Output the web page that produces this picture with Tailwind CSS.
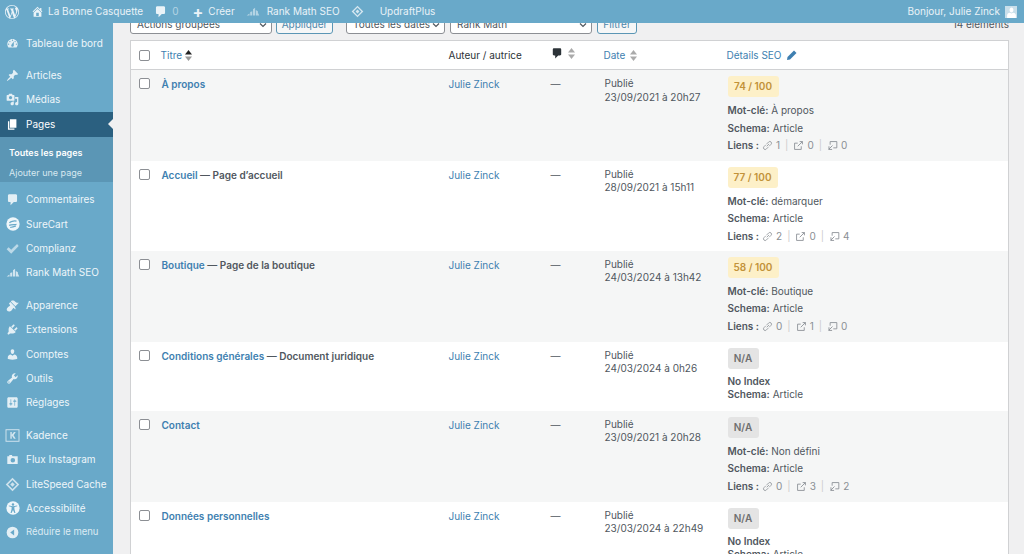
<!DOCTYPE html>
<html lang="fr">
<head>
  <meta charset="UTF-8">
  <title>Pages - La Bonne Casquette</title>
  <script src="https://cdn.jsdelivr.net/npm/@tailwindcss/browser@4"></script>
</head>
<body class="font-['Inter',sans-serif] text-[10px] bg-[#f0f0f1] text-[#50575e] overflow-hidden">
  <svg class="hidden">
    <symbol id="i-rank" viewBox="0 0 20 20"><path d="M1 15l4-3v3zM6 15v-5l3-1v6zM10 15V6l3-2v11zM14 15V7l3 2v6zM17 11l2 4h-2z"/></symbol>
    <symbol id="i-diamond" viewBox="0 0 20 20"><path fill-rule="evenodd" d="M10 1l9 9-9 9-9-9zM10 4l-6 6 6 6 6-6z"/><path d="M10 7l3 3-3 3-3-3z"/></symbol>
    <symbol id="i-comment" viewBox="0 0 20 20"><path d="M5 2h10c1.1 0 2 .9 2 2v8c0 1.1-.9 2-2 2h-3l-5 5v-5H5c-1.1 0-2-.9-2-2V4c0-1.100.9-2 2-2z"/></symbol>
    <symbol id="i-link" viewBox="0 0 14 14"><path fill="none" stroke="currentColor" stroke-width="1" d="M6 8l3-3M5 6L2.500 8.500a2 2 0 0 0 3 3L8 9M6 5l2.500-2.500a2 2 0 0 1 3 3L9 8"/></symbol>
    <symbol id="i-ext" viewBox="0 0 14 14"><path fill="none" stroke="currentColor" stroke-width="1.100" d="M10.500 8v4h-8.500V4h4M6 8l6-6M8.500 2H12v3.500"/></symbol>
    <symbol id="i-int" viewBox="0 0 14 14"><path fill="none" stroke="currentColor" stroke-width="1.100" d="M4 6V2h8.500v8H8M2 12l5-5M2.500 8v4H6.500"/></symbol>
  </svg>

  <!-- barre d'admin, passe au-dessus du contenu -->
  <header class="absolute top-0 left-0 z-10 w-full h-[23px] bg-[#69a9c9] text-[#eaf3f8] flex items-center justify-between pr-[7px]">
    <div class="flex items-center">
      <svg class="w-[14px] h-[14px] ml-[5px] fill-[#eaf3f8]" viewBox="0 0 20 20"><path d="M20 10c0-5.510-4.490-10-10-10C4.480 0 0 4.490 0 10c0 5.520 4.480 10 10 10 5.510 0 10-4.480 10-10zM7.780 15.370L4.370 6.220c.55-.02 1.170-.08 1.170-.08.5-.06.44-1.130-.06-1.110 0 0-1.450.11-2.370.11-.18 0-.37 0-.58-.01C4.120 2.690 6.870 1.110 10 1.110c2.330 0 4.450.87 6.050 2.340-.68-.11-1.650.39-1.650 1.580 0 .74.45 1.360.9 2.100.35.61.55 1.360.55 2.460 0 1.490-1.400 5-1.400 5l-3.030-8.370c.54-.02.82-.17.82-.17.5-.05.44-1.250-.06-1.220 0 0-1.440.12-2.380.12-.87 0-2.330-.12-2.330-.12-.5-.03-.56 1.200-.06 1.220l.92.08 1.260 3.410zM17.410 10c.24-.64.74-1.870.43-4.250.7 1.290 1.050 2.710 1.050 4.250 0 3.290-1.730 6.240-4.400 7.780.97-2.590 1.940-5.200 2.920-7.780zM6.100 18.090C3.120 16.650 1.110 13.530 1.110 10c0-1.300.23-2.480.72-3.590C3.250 10.300 4.670 14.200 6.100 18.090zm4.030-6.630l2.580 6.980c-.86.29-1.760.45-2.710.45-.79 0-1.570-.11-2.290-.33.81-2.380 1.620-4.740 2.420-7.100z"/></svg>
      <svg class="w-[13px] h-[13px] ml-[12px] fill-[#eaf3f8]" viewBox="0 0 20 20"><path d="M16 8.500l1.530 1.530-1.060 1.060L10 4.620l-6.470 6.470-1.060-1.060L10 2.500l4 4v-2h2v4zm-6-2.460l6 5.990V18H4v-5.970zM12 17v-5H8v5h4z"/></svg>
      <span class="ml-[4px]">La Bonne Casquette</span>
      <svg class="w-[13px] h-[13px] ml-[11px] fill-[#eaf3f8]"><use href="#i-comment"/></svg>
      <span class="ml-[5px] text-[#b4d4e4]">0</span>
      <span class="ml-[14px] text-[16px] leading-none font-bold">+</span>
      <span class="ml-[5px]">Créer</span>
      <svg class="w-[14px] h-[14px] ml-[11px] fill-[#b4d4e4]"><use href="#i-rank"/></svg>
      <span class="ml-[7px]">Rank Math SEO</span>
      <svg class="w-[13px] h-[13px] ml-[11px] fill-[#d5e7f0]"><use href="#i-diamond"/></svg>
      <span class="ml-[16px]">UpdraftPlus</span>
    </div>
    <div class="flex items-center">
      <span>Bonjour, Julie Zinck</span>
      <span class="ml-[5px] w-[12px] h-[12px] bg-[#c9dfea] flex items-end justify-center overflow-hidden">
        <svg class="w-[11px] h-[11px] fill-white" viewBox="0 0 20 20"><path d="M10 10c-2.500 0-3.500-3-3.500-5S8 1 10 1s3.500 2 3.500 4-1 5-3.500 5zm0 2l3-1.500c3 0 5 2.500 5 5V20H2v-4.500c0-2.500 2-5 5-5z"/></svg>
      </span>
    </div>
  </header>

  <div class="flex h-[554px] overflow-hidden">
    <!-- menu latéral -->
    <aside class="w-[113px] shrink-0 bg-[#69a9c9] text-[#eef6fa] pt-[31px]">
      <a class="flex items-center h-[24.4px]"><svg class="w-[13px] h-[13px] ml-[6px] mr-[7px] fill-[#e3eff5]" viewBox="0 0 20 20"><path d="M3.760 16h12.480c1.100-1.370 1.760-3.110 1.760-5 0-4.420-3.580-8-8-8s-8 3.580-8 8c0 1.890.66 3.630 1.760 5zM10 4c.55 0 1 .45 1 1s-.45 1-1 1-1-.45-1-1 .45-1 1-1zM6 6c.55 0 1 .45 1 1s-.45 1-1 1-1-.45-1-1 .45-1 1-1zm8 0c.55 0 1 .45 1 1s-.45 1-1 1-1-.45-1-1 .45-1 1-1zm-5.370 5.550L12 7v6c0 1.100-.9 2-2 2s-2-.9-2-2c0-.57.24-1.080.63-1.450zM4 10c.55 0 1 .45 1 1s-.45 1-1 1-1-.45-1-1 .45-1 1-1zm12 0c.55 0 1 .45 1 1s-.45 1-1 1-1-.45-1-1 .45-1 1-1z"/></svg>Tableau de bord</a>
      <div class="h-[8px]"></div>
      <a class="flex items-center h-[24.4px]"><svg class="w-[13px] h-[13px] ml-[6px] mr-[7px] fill-[#e3eff5]" viewBox="0 0 20 20"><path d="M10.440 3.020l1.820-1.820 6.360 6.350-1.830 1.820c-1.050-.68-2.480-.57-3.410.36l-.75.75c-.92.93-1.040 2.350-.35 3.410l-1.830 1.820-2.410-2.410-2.800 2.790c-.42.42-3.380 2.710-3.800 2.290s1.860-3.390 2.280-3.810l2.790-2.790L4.100 9.360l1.830-1.820c1.050.69 2.480.57 3.400-.36l.75-.75c.93-.92 1.050-2.350.36-3.410z"/></svg>Articles</a>
      <a class="flex items-center h-[24.4px]"><svg class="w-[13px] h-[13px] ml-[6px] mr-[7px] fill-[#e3eff5]" viewBox="0 0 20 20"><path d="M13 11V4c0-.55-.45-1-1-1h-1.670L9 1H5L3.670 3H2c-.55 0-1 .45-1 1v7c0 .55.45 1 1 1h10c.55 0 1-.45 1-1zM7 4.500c1.380 0 2.500 1.120 2.500 2.500S8.380 9.500 7 9.500 4.500 8.380 4.500 7 5.620 4.500 7 4.500zM14 6h5v10.500c0 1.380-1.120 2.500-2.500 2.500S14 17.880 14 16.500s1.120-2.500 2.500-2.500c.17 0 .34.02.5.05V9h-3V6zm-4 8.050V13h2v3.500c0 1.380-1.120 2.500-2.500 2.500S7 17.880 7 16.500 8.120 14 9.500 14c.17 0 .34.02.5.05z"/></svg>Médias</a>
      <a class="relative flex items-center h-[24.4px] bg-[#2b6080] text-white"><svg class="w-[13px] h-[13px] ml-[6px] mr-[7px] fill-white" viewBox="0 0 20 20"><path d="M6 15V2h10v13H6zm-1 1h8v2H3V5h2v11z"/></svg>Pages<span class="absolute right-0 top-[7px] border-y-[5px] border-r-[5px] border-y-transparent border-r-[#f0f0f1]"></span></a>
      <div class="bg-[#5b96b5] h-[45px] pt-[7px] pl-[9px] text-[9px]">
        <a class="flex items-center h-[19px] font-semibold text-white">Toutes les pages</a>
        <a class="flex items-center h-[21px] text-[#d7e8f0]">Ajouter une page</a>
      </div>
      <a class="flex items-center h-[24.4px] mt-[6px]"><svg class="w-[13px] h-[13px] ml-[6px] mr-[7px] fill-[#e3eff5]"><use href="#i-comment"/></svg>Commentaires</a>
      <a class="flex items-center h-[24.4px]"><svg class="w-[14px] h-[14px] ml-[6px] mr-[6px]" viewBox="0 0 20 20"><circle cx="10" cy="10" r="9.500" fill="#eef6fa"/><path d="M5 8.500c1-2 6-3.500 10-2.500M4.500 12c3-1 7-1 10.500-1.500M6 15c2-1 5-1 8-2" stroke="#69a9c9" stroke-width="1.800" fill="none"/></svg>SureCart</a>
      <a class="flex items-center h-[24.4px]"><svg class="w-[13px] h-[13px] ml-[6px] mr-[7px] fill-[#bcd9e8]" viewBox="0 0 20 20"><path d="M1 11l3-3 4 4L17 3l2.500 3L8 18z"/></svg>Complianz</a>
      <a class="flex items-center h-[24.4px]"><svg class="w-[14px] h-[14px] ml-[6px] mr-[6px] fill-[#d2e5ef]"><use href="#i-rank"/></svg>Rank Math SEO</a>
      <div class="h-[8px]"></div>
      <a class="flex items-center h-[24.4px]"><svg class="w-[13px] h-[13px] ml-[6px] mr-[7px] fill-[#e3eff5]" viewBox="0 0 20 20"><path d="M14.480 11.060L7.410 3.990l1.500-1.500c.5-.56 2.300-.47 3.510.32 1.210.8 1.430 1.280 2.910 2.100 1.180.64 2.450 1.260 4.450.85zm-.71.71L6.700 4.700 4.930 6.470c-.39.39-.39 1.020 0 1.410l1.060 1.060c.39.39.39 1.030 0 1.420-.6.6-1.430 1.110-2.210 1.690-.35.26-.7.53-1.010.84C1.430 13.230.77 15.700 1.400 17.350c.28.73.84 1.280 1.580 1.570 1.650.63 4.120-.03 5.460-1.370.31-.31.58-.66.84-1.010.58-.78 1.090-1.610 1.690-2.210.39-.39 1.030-.39 1.420 0l1.060 1.060c.39.39 1.020.39 1.410 0z"/></svg>Apparence</a>
      <a class="flex items-center h-[24.4px]"><svg class="w-[13px] h-[13px] ml-[6px] mr-[7px] fill-[#e3eff5]" viewBox="0 0 20 20"><path d="M13.110 4.360L9.870 7.600 8 5.730l3.240-3.240c.35-.34 1.050-.2 1.560.32.52.51.66 1.210.31 1.550zm-8 1.770l.91-1.120 9.010 9.010-1.190.84c-.71.71-2.630 1.160-3.820 1.160H6.140L4.900 17.260c-.59.59-1.540.59-2.120 0-.59-.58-.59-1.530 0-2.120l1.240-1.240v-3.880c0-1.130.4-3.190 1.090-3.890zm7.260 3.970l3.240-3.240c.34-.35 1.040-.21 1.550.31.52.51.66 1.210.31 1.550l-3.240 3.250z"/></svg>Extensions</a>
      <a class="flex items-center h-[24.4px]"><svg class="w-[13px] h-[13px] ml-[6px] mr-[7px] fill-[#e3eff5]" viewBox="0 0 20 20"><path d="M10 9.250c-2.270 0-2.730-3.440-2.730-3.440C7 4.020 7.820 2 9.970 2c2.160 0 2.980 2.020 2.710 3.810 0 0-.41 3.440-2.680 3.440zm0 2.570L12.720 10c2.390 0 4.520 2.330 4.520 4.530v2.490s-3.650 1.130-7.240 1.130c-3.650 0-7.240-1.130-7.240-1.130v-2.490c0-2.250 1.940-4.480 4.470-4.480z"/></svg>Comptes</a>
      <a class="flex items-center h-[24.4px]"><svg class="w-[13px] h-[13px] ml-[6px] mr-[7px] fill-[#e3eff5]" viewBox="0 0 20 20"><path d="M16.680 9.770c-1.340 1.340-3.300 1.670-4.950.99l-5.410 6.520c-.99.99-2.590.99-3.580 0s-.99-2.590 0-3.570l6.520-5.420c-.68-1.650-.35-3.610.99-4.950 1.280-1.280 3.120-1.620 4.720-1.060l-2.890 2.890 2.820 2.820 2.860-2.870c.53 1.580.18 3.390-1.080 4.650zM3.810 16.210c.4.39 1.040.39 1.430 0 .4-.4.4-1.040 0-1.430-.39-.4-1.030-.4-1.430 0-.39.39-.39 1.030 0 1.430z"/></svg>Outils</a>
      <a class="flex items-center h-[24.4px]"><svg class="w-[13px] h-[13px] ml-[6px] mr-[7px] fill-[#e3eff5]" viewBox="0 0 20 20"><path d="M18 16V4c0-1.100-.9-2-2-2H4c-1.100 0-2 .9-2 2v12c0 1.100.9 2 2 2h12c1.100 0 2-.9 2-2zM8 11h1c.55 0 1 .45 1 1s-.45 1-1 1H8v1.500c0 .28-.22.5-.5.5s-.5-.22-.5-.5V13H6c-.55 0-1-.45-1-1s.45-1 1-1h1V5.500c0-.28.22-.5.5-.5s.5.22.5.5V11zm5-2h-1c-.55 0-1-.45-1-1s.45-1 1-1h1V5.500c0-.28.22-.5.5-.5s.5.22.5.5V7h1c.55 0 1 .45 1 1s-.45 1-1 1h-1v5.500c0 .28-.22.5-.5.5s-.5-.22-.5-.5V9z"/></svg>Réglages</a>
      <div class="h-[8px]"></div>
      <a class="flex items-center h-[24.4px]"><svg class="w-[15px] h-[13px] ml-[5px] mr-[6px]" viewBox="0 0 20 18"><rect x="1" y="1" width="18" height="16" fill="none" stroke="#d2e5ef" stroke-width="1.300"/><path d="M7 4h2v4l3-4h2.500l-3 4.500 3 5H12L9 9v4.500H7z" fill="#d2e5ef"/></svg>Kadence</a>
      <a class="flex items-center h-[24.4px]"><svg class="w-[13px] h-[13px] ml-[6px] mr-[7px] fill-[#e3eff5]" viewBox="0 0 20 20"><path fill-rule="evenodd" d="M2 5h3V3h4l1 2h8v12H2zM10.500 7.500a3.500 3.500 0 1 0 0 7 3.500 3.500 0 0 0 0-7z"/></svg>Flux Instagram</a>
      <a class="flex items-center h-[24.4px]"><svg class="w-[15px] h-[15px] ml-[5px] mr-[6px] fill-[#cfe3ed]"><use href="#i-diamond"/></svg>LiteSpeed Cache</a>
      <a class="flex items-center h-[24.4px]"><svg class="w-[14px] h-[14px] ml-[6px] mr-[6px]" viewBox="0 0 20 20"><circle cx="10" cy="10" r="9.500" fill="#eef6fa"/><circle cx="10" cy="5" r="1.700" fill="#69a9c9"/><path d="M4 7.500l4 1v3l-1.500 5.500h1.500l2-4 2 4h1.500L12 11.500v-3l4-1V6.500l-6 1-6-1z" fill="#69a9c9"/></svg>Accessibilité</a>
      <a class="flex items-center h-[23px] text-[9.500px] text-[#dcebf3]"><svg class="w-[13px] h-[13px] ml-[6px] mr-[7px]" viewBox="0 0 20 20"><circle cx="10" cy="10" r="9" fill="#e3eff5"/><path d="M12.500 5.500v9L6.500 10z" fill="#69a9c9"/></svg>Réduire le menu</a>
    </aside>

    <main class="flex-1 pl-[17px] pr-[15px] pt-[15px]">
      <!-- filtres, coupés par la barre d'admin -->
      <div class="flex items-center h-[19px]">
        <div class="w-[142px] h-[19px] bg-white border border-[#8c8f94] rounded-[3px] pl-[6px] pr-[3px] flex items-center justify-between">Actions groupées<svg class="w-[10px] h-[10px]" viewBox="0 0 10 10"><path d="M2 3.500l3 3 3-3" fill="none" stroke="#50575e" stroke-width="1.200"/></svg></div>
        <div class="ml-[4px] w-[57px] h-[19px] bg-[#f6f7f7] border border-[#5b96b5] rounded-[3px] text-[#4f87ab] flex items-center justify-center">Appliquer</div>
        <div class="ml-[13px] w-[99px] h-[19px] bg-white border border-[#8c8f94] rounded-[3px] pl-[6px] pr-[3px] flex items-center justify-between">Toutes les dates<svg class="w-[10px] h-[10px]" viewBox="0 0 10 10"><path d="M2 3.500l3 3 3-3" fill="none" stroke="#50575e" stroke-width="1.200"/></svg></div>
        <div class="ml-[5px] w-[142px] h-[19px] bg-white border border-[#8c8f94] rounded-[3px] pl-[6px] pr-[3px] flex items-center justify-between">Rank Math<svg class="w-[10px] h-[10px]" viewBox="0 0 10 10"><path d="M2 3.500l3 3 3-3" fill="none" stroke="#50575e" stroke-width="1.200"/></svg></div>
        <div class="ml-[5px] w-[40px] h-[19px] bg-[#f6f7f7] border border-[#5b96b5] rounded-[3px] text-[#4f87ab] flex items-center justify-center">Filtrer</div>
        <div class="ml-auto pr-[0px] text-[#50575e]">14 éléments</div>
      </div>

      <table class="mt-[6px] w-[879px] table-fixed border-collapse bg-white border border-[#d0d1d3]">
        <colgroup>
          <col class="w-[24px]"><col class="w-[287px]"><col class="w-[102px]"><col class="w-[54px]"><col class="w-[123px]"><col>
        </colgroup>
        <thead>
          <tr class="h-[29px] border-b border-[#d0d1d3] text-left font-normal">
            <th class="pl-[8px] font-normal"><span class="block w-[11px] h-[11px] bg-white border border-[#8c8f94] rounded-[2px]"></span></th>
            <th class="pl-[6px] font-normal text-[#3e7fb0]"><span class="inline-flex items-center">Titre<svg class="ml-[3px] w-[7px] h-[11px]" viewBox="0 0 7 11"><path d="M3.500 0L7 4.500H0z" fill="#222"/><path d="M3.500 11L0 6.500h7z" fill="#999"/></svg></span></th>
            <th class="pl-[7px] font-normal text-[#2c3338]">Auteur / autrice</th>
            <th class="pl-[7px] font-normal"><span class="inline-flex items-center"><svg class="w-[12px] h-[12px] fill-[#2c3338]"><use href="#i-comment"/></svg><svg class="ml-[5px] w-[7px] h-[11px]" viewBox="0 0 7 11"><path d="M3.500 0L7 4.500H0z" fill="#aaa"/><path d="M3.500 11L0 6.500h7z" fill="#aaa"/></svg></span></th>
            <th class="pl-[6px] font-normal text-[#3e7fb0]"><span class="inline-flex items-center">Date<svg class="ml-[5px] w-[7px] h-[11px]" viewBox="0 0 7 11"><path d="M3.500 0L7 4.500H0z" fill="#aaa"/><path d="M3.500 11L0 6.500h7z" fill="#aaa"/></svg></span></th>
            <th class="pl-[6px] font-normal text-[#3e7fb0]"><span class="inline-flex items-center">Détails SEO<svg class="ml-[5px] w-[10px] h-[10px] fill-[#3e7fb0]" viewBox="0 0 10 10"><path d="M7 .5l2.500 2.500L3 9.500 0 10l.5-3z"/></svg></span></th>
          </tr>
        </thead>
        <tbody class="align-top">
          <tr class="h-[91px] bg-[#f5f6f6]">
            <td class="pl-[8px] pt-[8px]"><span class="block w-[11px] h-[11px] bg-white border border-[#8c8f94] rounded-[2px]"></span></td>
            <td class="pl-[7px] pt-[7px] font-semibold"><a class="text-[#3e7fb0]">À propos</a></td>
            <td class="pl-[7px] pt-[7px]"><a class="text-[#3e7fb0]">Julie Zinck</a></td>
            <td class="pl-[7px] pt-[7px]">—</td>
            <td class="pl-[7px] pt-[7px] leading-[13.500px]">Publié<br>23/09/2021 à 20h27</td>
            <td class="pl-[7px] pt-[6px]">
              <span class="block w-[51px] h-[21px] leading-[21px] text-center rounded-[3px] bg-[#fdf0c8] text-[#c29239] font-semibold">74 / 100</span>
              <p class="mt-[5px] leading-[17.500px]"><b class="font-semibold">Mot-clé:</b> À propos</p>
              <p class="leading-[17.500px]"><b class="font-semibold">Schema:</b> Article</p>
              <p class="flex items-center h-[17.500px] text-[#8a8f94]"><b class="font-semibold text-[#50575e] mr-[3px]">Liens :</b><svg class="w-[11px] h-[11px]"><use href="#i-link"/></svg><span class="ml-[3px]">1</span><span class="mx-[5px] text-[#ccc]">|</span><svg class="w-[11px] h-[11px]"><use href="#i-ext"/></svg><span class="ml-[3px]">0</span><span class="mx-[5px] text-[#ccc]">|</span><svg class="w-[11px] h-[11px]"><use href="#i-int"/></svg><span class="ml-[3px]">0</span></p>
            </td>
          </tr>
          <tr class="h-[90px] bg-white">
            <td class="pl-[8px] pt-[8px]"><span class="block w-[11px] h-[11px] bg-white border border-[#8c8f94] rounded-[2px]"></span></td>
            <td class="pl-[7px] pt-[7px] font-semibold"><a class="text-[#3e7fb0]">Accueil</a> — Page d’accueil</td>
            <td class="pl-[7px] pt-[7px]"><a class="text-[#3e7fb0]">Julie Zinck</a></td>
            <td class="pl-[7px] pt-[7px]">—</td>
            <td class="pl-[7px] pt-[7px] leading-[13.500px]">Publié<br>28/09/2021 à 15h11</td>
            <td class="pl-[7px] pt-[6px]">
              <span class="block w-[50px] h-[21px] leading-[21px] text-center rounded-[3px] bg-[#fdf0c8] text-[#c29239] font-semibold">77 / 100</span>
              <p class="mt-[5px] leading-[17.500px]"><b class="font-semibold">Mot-clé:</b> démarquer</p>
              <p class="leading-[17.500px]"><b class="font-semibold">Schema:</b> Article</p>
              <p class="flex items-center h-[17.500px] text-[#8a8f94]"><b class="font-semibold text-[#50575e] mr-[3px]">Liens :</b><svg class="w-[11px] h-[11px]"><use href="#i-link"/></svg><span class="ml-[3px]">2</span><span class="mx-[5px] text-[#ccc]">|</span><svg class="w-[11px] h-[11px]"><use href="#i-ext"/></svg><span class="ml-[3px]">0</span><span class="mx-[5px] text-[#ccc]">|</span><svg class="w-[11px] h-[11px]"><use href="#i-int"/></svg><span class="ml-[3px]">4</span></p>
            </td>
          </tr>
          <tr class="h-[91px] bg-[#f5f6f6]">
            <td class="pl-[8px] pt-[8px]"><span class="block w-[11px] h-[11px] bg-white border border-[#8c8f94] rounded-[2px]"></span></td>
            <td class="pl-[7px] pt-[7px] font-semibold"><a class="text-[#3e7fb0]">Boutique</a> — Page de la boutique</td>
            <td class="pl-[7px] pt-[7px]"><a class="text-[#3e7fb0]">Julie Zinck</a></td>
            <td class="pl-[7px] pt-[7px]">—</td>
            <td class="pl-[7px] pt-[7px] leading-[13.500px]">Publié<br>24/03/2024 à 13h42</td>
            <td class="pl-[7px] pt-[6px]">
              <span class="block w-[51px] h-[21px] leading-[21px] text-center rounded-[3px] bg-[#fdf0c8] text-[#c29239] font-semibold">58 / 100</span>
              <p class="mt-[5px] leading-[17.500px]"><b class="font-semibold">Mot-clé:</b> Boutique</p>
              <p class="leading-[17.500px]"><b class="font-semibold">Schema:</b> Article</p>
              <p class="flex items-center h-[17.500px] text-[#8a8f94]"><b class="font-semibold text-[#50575e] mr-[3px]">Liens :</b><svg class="w-[11px] h-[11px]"><use href="#i-link"/></svg><span class="ml-[3px]">0</span><span class="mx-[5px] text-[#ccc]">|</span><svg class="w-[11px] h-[11px]"><use href="#i-ext"/></svg><span class="ml-[3px]">1</span><span class="mx-[5px] text-[#ccc]">|</span><svg class="w-[11px] h-[11px]"><use href="#i-int"/></svg><span class="ml-[3px]">0</span></p>
            </td>
          </tr>
          <tr class="h-[69px] bg-white">
            <td class="pl-[8px] pt-[8px]"><span class="block w-[11px] h-[11px] bg-white border border-[#8c8f94] rounded-[2px]"></span></td>
            <td class="pl-[7px] pt-[7px] font-semibold"><a class="text-[#3e7fb0]">Conditions générales</a> — Document juridique</td>
            <td class="pl-[7px] pt-[7px]"><a class="text-[#3e7fb0]">Julie Zinck</a></td>
            <td class="pl-[7px] pt-[7px]">—</td>
            <td class="pl-[7px] pt-[7px] leading-[13.500px]">Publié<br>24/03/2024 à 0h26</td>
            <td class="pl-[7px] pt-[6px]">
              <span class="block w-[31px] h-[21px] leading-[21px] text-center rounded-[3px] bg-[#e4e4e4] text-[#6f6f6f] font-semibold">N/A</span>
              <p class="mt-[6px] leading-[13.500px] font-semibold">No Index</p>
              <p class="leading-[13.500px]"><b class="font-semibold">Schema:</b> Article</p>
            </td>
          </tr>
          <tr class="h-[91px] bg-[#f5f6f6]">
            <td class="pl-[8px] pt-[8px]"><span class="block w-[11px] h-[11px] bg-white border border-[#8c8f94] rounded-[2px]"></span></td>
            <td class="pl-[7px] pt-[7px] font-semibold"><a class="text-[#3e7fb0]">Contact</a></td>
            <td class="pl-[7px] pt-[7px]"><a class="text-[#3e7fb0]">Julie Zinck</a></td>
            <td class="pl-[7px] pt-[7px]">—</td>
            <td class="pl-[7px] pt-[7px] leading-[13.500px]">Publié<br>23/09/2021 à 20h28</td>
            <td class="pl-[7px] pt-[6px]">
              <span class="block w-[31px] h-[21px] leading-[21px] text-center rounded-[3px] bg-[#e4e4e4] text-[#6f6f6f] font-semibold">N/A</span>
              <p class="mt-[5px] leading-[17.500px]"><b class="font-semibold">Mot-clé:</b> Non défini</p>
              <p class="leading-[17.500px]"><b class="font-semibold">Schema:</b> Article</p>
              <p class="flex items-center h-[17.500px] text-[#8a8f94]"><b class="font-semibold text-[#50575e] mr-[3px]">Liens :</b><svg class="w-[11px] h-[11px]"><use href="#i-link"/></svg><span class="ml-[3px]">0</span><span class="mx-[5px] text-[#ccc]">|</span><svg class="w-[11px] h-[11px]"><use href="#i-ext"/></svg><span class="ml-[3px]">3</span><span class="mx-[5px] text-[#ccc]">|</span><svg class="w-[11px] h-[11px]"><use href="#i-int"/></svg><span class="ml-[3px]">2</span></p>
            </td>
          </tr>
          <tr class="h-[69px] bg-white">
            <td class="pl-[8px] pt-[8px]"><span class="block w-[11px] h-[11px] bg-white border border-[#8c8f94] rounded-[2px]"></span></td>
            <td class="pl-[7px] pt-[7px] font-semibold"><a class="text-[#3e7fb0]">Données personnelles</a></td>
            <td class="pl-[7px] pt-[7px]"><a class="text-[#3e7fb0]">Julie Zinck</a></td>
            <td class="pl-[7px] pt-[7px]">—</td>
            <td class="pl-[7px] pt-[7px] leading-[13.500px]">Publié<br>23/03/2024 à 22h49</td>
            <td class="pl-[7px] pt-[6px]">
              <span class="block w-[31px] h-[21px] leading-[21px] text-center rounded-[3px] bg-[#e4e4e4] text-[#6f6f6f] font-semibold">N/A</span>
              <p class="mt-[6px] leading-[13.500px] font-semibold">No Index</p>
              <p class="leading-[13.500px]"><b class="font-semibold">Schema:</b> Article</p>
            </td>
          </tr>
        </tbody>
      </table>
    </main>
  </div>
</body>
</html>
